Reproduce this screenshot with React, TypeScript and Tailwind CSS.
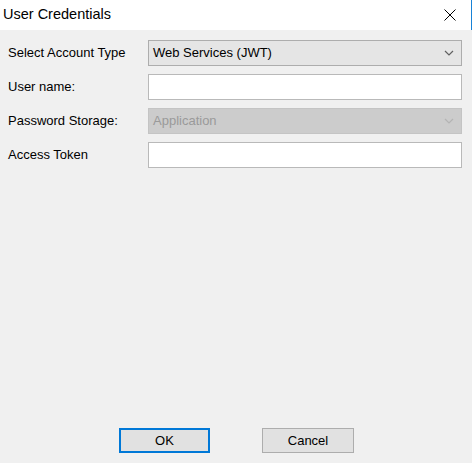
import { ReactNode } from "react";

const Chevron = ({ disabled }: { disabled?: boolean }) => (
  <svg width="10" height="6" viewBox="0 0 10 6" className="shrink-0">
    <polyline
      points="1,1 5,5 9,1"
      fill="none"
      stroke={disabled ? "#b4b4b4" : "#606060"}
      strokeWidth="1.2"
    />
  </svg>
);

const Row = ({ label, children }: { label: string; children: ReactNode }) => (
  <div className="flex items-center h-[26px]">
    <div className="w-[148px] shrink-0 pl-[8px] text-[13px] text-black">{label}</div>
    {children}
  </div>
);

const Combo = ({ value, disabled }: { value: string; disabled?: boolean }) => (
  <div
    className={
      disabled
        ? "flex items-center justify-between w-[314px] h-[26px] border border-[#c4c4c4] bg-[#cccccc] pl-[4px] pr-[7px] text-[13px] text-[#9a9a9a]"
        : "flex items-center justify-between w-[314px] h-[26px] border border-[#adadad] bg-[#e5e5e5] pl-[4px] pr-[7px] text-[13px] text-black"
    }
  >
    <span>{value}</span>
    <Chevron disabled={disabled} />
  </div>
);

const TextBox = () => (
  <div className="w-[314px] h-[26px] border border-[#b9b9b9] bg-white"></div>
);

export default function App() {
  return (
    <div
      className="w-[472px] h-[463px] flex flex-col bg-[#f0f0f0] overflow-hidden"
      style={{ fontFamily: '"Liberation Sans", Arial, sans-serif' }}
    >
      {/* title bar */}
      <div className="h-[30px] shrink-0 flex items-center justify-between bg-white border-r border-[#1883d7]">
        <span className="pl-[3px] text-[14.5px] text-black">User Credentials</span>
        <svg width="12" height="12" viewBox="0 0 12 12" className="mr-[15px]">
          <line x1="0.5" y1="0.5" x2="11.5" y2="11.5" stroke="#000" strokeWidth="1" />
          <line x1="11.5" y1="0.5" x2="0.5" y2="11.5" stroke="#000" strokeWidth="1" />
        </svg>
      </div>

      {/* form */}
      <div className="flex-1 flex flex-col gap-[8px] pt-[10px]">
        <Row label="Select Account Type">
          <Combo value="Web Services (JWT)" />
        </Row>
        <Row label="User name:">
          <TextBox />
        </Row>
        <Row label="Password Storage:">
          <Combo value="Application" disabled />
        </Row>
        <Row label="Access Token">
          <TextBox />
        </Row>
      </div>

      {/* buttons */}
      <div className="flex pb-[10px] pl-[119px] gap-[52px]">
        <button className="w-[91px] h-[25px] border-2 border-[#0078d7] bg-[#e1e1e1] text-[13px] text-black">
          OK
        </button>
        <button className="w-[92px] h-[25px] border border-[#adadad] bg-[#e1e1e1] text-[13px] text-black">
          Cancel
        </button>
      </div>
    </div>
  );
}
